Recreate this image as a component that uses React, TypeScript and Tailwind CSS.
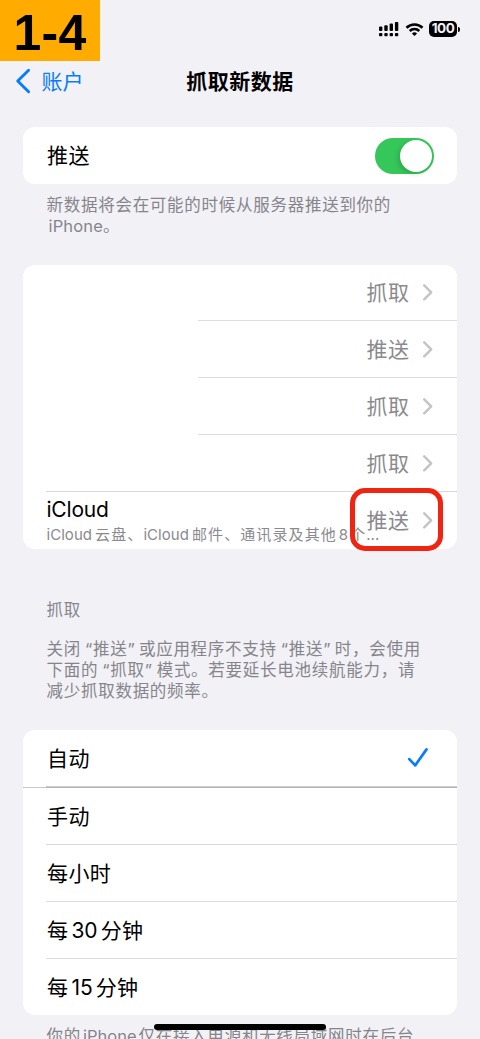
import React from "react";

const CJK = "font-['Inter','Noto_Sans_CJK_SC',sans-serif]";

function Latin({ children, className = "" }: { children: React.ReactNode; className?: string }) {
  return <span className={className}>{children}</span>;
}

function Chevron() {
  return (
    <svg width="12" height="18" viewBox="0 0 12 18" fill="none" className="shrink-0">
      <path d="M2.2 2.3L9.2 9.3L2.2 16.3" stroke="#c4c4c7" strokeWidth="2.4" strokeLinecap="round" strokeLinejoin="round" />
    </svg>
  );
}

function FetchValue({ label }: { label: string }) {
  return (
    <div className="flex items-center gap-[12px] text-[#8a8a8e]">
      <span className="pt-[2px] text-[21px] leading-[28px] tracking-[0.5px]">{label}</span>
      <Chevron />
    </div>
  );
}

function StatusIcons() {
  return (
    <div className="flex items-center">
      <svg width="20" height="16" viewBox="0 0 20 16" fill="#000">
        <rect x="0" y="5.5" width="3.4" height="4.5" rx="1" />
        <rect x="5.3" y="4.2" width="3.4" height="5.8" rx="1" />
        <rect x="10.6" y="2.5" width="3.4" height="7.5" rx="1" />
        <rect x="15.9" y="1" width="3.4" height="9" rx="1" />
        <rect x="0" y="12" width="3.4" height="3.3" rx="1" />
        <rect x="5.3" y="12" width="3.4" height="3.3" rx="1" />
        <rect x="10.6" y="12" width="3.4" height="3.3" rx="1" />
        <rect x="15.9" y="12" width="3.4" height="3.3" rx="1" />
      </svg>
      <svg width="19" height="15" viewBox="0 0 19 15" fill="none" className="ml-[6px]">
        <path d="M1.5 5.7A11.6 11.6 0 0 1 17.5 5.7" stroke="#000" strokeWidth="2.6" />
        <path d="M4.7 9A6.9 6.9 0 0 1 14.3 9" stroke="#000" strokeWidth="2.5" />
        <path d="M6.9 11.5A3.8 3.8 0 0 1 12.1 11.5L9.5 14.1Z" fill="#000" />
      </svg>
      <span className="ml-[5px] flex h-[16px] w-[28px] items-center justify-center rounded-[5px] bg-black font-['Inter',sans-serif] text-[13.5px] leading-none font-bold tracking-[-0.5px] text-[#f2f1f6]">
        100
      </span>
      <span className="ml-px h-[5px] w-[2px] rounded-r-full bg-black" />
    </div>
  );
}

const accounts = ["抓取", "推送", "抓取", "抓取"];

export default function App() {
  return (
    <div lang="zh-CN" className={`relative h-[1039px] w-[480px] overflow-hidden bg-[#f2f1f6] text-black ${CJK}`}>
      <header className="flex h-[61px] items-start justify-between">
        <div className="flex h-[61px] w-[100px] items-center justify-center bg-[#ffab00] pt-[4px] font-['Liberation_Sans',sans-serif] text-[50px] leading-none font-bold tracking-[0.3px]">
          1-4
        </div>
        <div className="mt-[21px] mr-[20px]">
          <StatusIcons />
        </div>
      </header>

      <nav className="grid h-[40px] grid-cols-[1fr_auto_1fr] items-center">
        <div className="flex items-center gap-[10px] pl-[14.5px] text-[#087cff]">
          <svg width="17" height="26" viewBox="0 0 17 26" fill="none">
            <path d="M13.6 2.2L2.7 13L13.6 23.8" stroke="currentColor" strokeWidth="2.9" strokeLinecap="round" strokeLinejoin="round" />
          </svg>
          <span className="pt-[2px] text-[21px] leading-[28px]">账户</span>
        </div>
        <h1 className="pt-[2px] text-[21px] leading-[28px] font-semibold tracking-[0.5px]">抓取新数据</h1>
        <div />
      </nav>

      <main className="px-[23.3px] pt-[26px]">
        <section className="flex h-[57px] items-center justify-between rounded-[12px] bg-white pr-[23.2px] pl-[23.7px]">
          <span className="pt-[1px] text-[21px] leading-[28px] tracking-[0.4px]">推送</span>
          <div className="flex h-[36px] w-[59px] items-center justify-end rounded-full bg-[#35c759] pr-[2px]">
            <div className="size-[32px] rounded-full bg-white shadow-[-2px_2px_5px_rgba(0,0,0,0.16)]" />
          </div>
        </section>
        <p className="mt-[11px] h-[41px] pl-[23.2px] text-[16.5px] leading-[20.5px] tracking-[0.73px] whitespace-nowrap text-[#85858b]">
          新数据将会在可能的时候从服务器推送到你的
          <br />
          <Latin className="ml-[2px] tracking-[0.15px]">iPhone</Latin>。
        </p>

        <section className="mt-[28.5px] flex h-[284px] flex-col rounded-[12px] bg-white">
          {accounts.map((label, i) => (
            <div key={i} className="flex h-[56.75px] flex-col">
              <div className="flex flex-1 items-center justify-end pr-[23.2px]">
                <FetchValue label={label} />
              </div>
              <div className={i === 3 ? "ml-[23.2px] h-px bg-[#d9d9dc]" : "ml-[175.2px] h-px bg-[#dedee0]"} />
            </div>
          ))}
          <div className="relative flex h-[57px] items-center justify-end pr-[23.2px]">
            <div className="min-w-0 flex-1 pt-[3px] pl-[23.2px] whitespace-nowrap">
              <div className="text-[21px] leading-[26px] tracking-[-0.2px]">iCloud</div>
              <div className="w-0 text-[15px] leading-[24px] tracking-[1.1px] text-[#8a8a8e]">
                <Latin className="mr-[3px] tracking-[0.05px]">iCloud</Latin>云盘、
                <Latin className="mr-[3px] tracking-[0.05px]">iCloud</Latin>邮件、通讯录及其他
                <Latin className="mx-[2px] tracking-[0px]">8</Latin>个
                <Latin className="tracking-[0px]">...</Latin>
              </div>
            </div>
            <FetchValue label="推送" />
            <div className="absolute -top-[3.5px] right-[13.7px] h-[62.5px] w-[93.5px] rounded-[15px] border-[5px] border-[#ef2411]" />
          </div>
        </section>

        <div className="mt-[51px] pl-[23.2px] text-[16.5px] leading-[21px] tracking-[0.73px] whitespace-nowrap text-[#85858b]">
          <h2>抓取</h2>
          <p className="mt-[18px]">
            关闭<Latin className="ml-[4px]">“</Latin>推送<Latin className="mr-[3.5px]">”</Latin>或应用程序不支持
            <Latin className="ml-[4px]">“</Latin>推送<Latin className="mr-[3.5px]">”</Latin>时，会使用
            <br />
            下面的<Latin className="ml-[4px]">“</Latin>抓取<Latin className="mr-[4px]">”</Latin>模式。若要延长电池续航能力，请
            <br />
            减少抓取数据的频率。
          </p>
        </div>

        <section className="mt-[28px] h-[285px] rounded-[12px] bg-white text-[21px] leading-[28px] tracking-[0.4px]">
          <div className="flex h-[56px] items-center justify-between pr-[28.2px] pl-[23.7px]">
            <span className="pt-[2px]">自动</span>
            <svg width="22" height="22" viewBox="0 0 22 22" fill="none">
              <path d="M2.3 12.1L8.2 18.4L19.5 2.4" stroke="#087cff" strokeWidth="2.7" strokeLinecap="round" strokeLinejoin="round" />
            </svg>
          </div>
          <div className="flex h-[2px] items-end">
            <div className="h-px w-[23.2px] bg-[#c9c9cb]" />
            <div className="h-[2px] flex-1 border-t border-[#cccccf] bg-[#b5b5b7]" />
          </div>
          <div className="flex h-[56px] items-center pt-[2px] pl-[23.7px]">手动</div>
          <div className="ml-[23.2px] h-px bg-[#d9d9dc]" />
          <div className="flex h-[56px] items-center pt-[2px] pl-[23.7px]">每小时</div>
          <div className="ml-[23.2px] h-px bg-[#dedee0]" />
          <div className="flex h-[56px] items-center pt-[2px] pl-[23.7px]">
            每<Latin className="mx-[3px] tracking-[0px]">30</Latin>分钟
          </div>
          <div className="ml-[23.2px] h-px bg-[#dedee0]" />
          <div className="flex h-[56px] items-center pt-[2px] pl-[23.7px]">
            每<Latin className="mx-[3px] tracking-[0px]">15</Latin>分钟
          </div>
        </section>
        <p className="mt-[11px] pl-[23.2px] text-[16.5px] leading-[21px] tracking-[0.73px] whitespace-nowrap text-[#85858b]">
          你的<Latin className="mx-[2px] tracking-[0px]">iPhone</Latin>仅在接入电源和无线局域网时在后台
        </p>
      </main>

      <div className="absolute top-[1023.5px] left-[154px] h-[6px] w-[172px] rounded-full bg-black" />
    </div>
  );
}
